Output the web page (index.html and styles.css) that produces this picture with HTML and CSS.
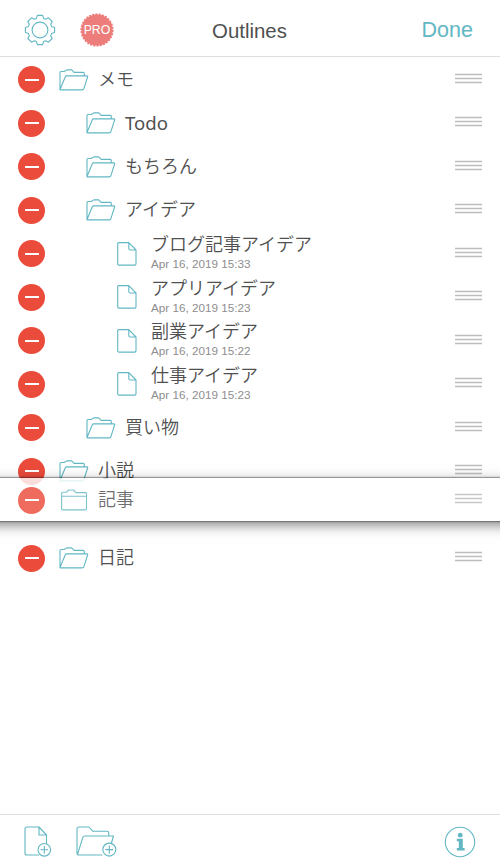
FILE: index.html
```html
<!DOCTYPE html>
<html lang="ja">
<head>
    <meta charset="UTF-8">
    <meta name="viewport" content="width=device-width, initial-scale=1.0">
    <title>Outlines</title>
    <link rel="stylesheet" href="styles.css">
</head>
<body>

    <!-- Shared icons -->
    <svg class="sprite">
        <symbol id="folder-open" viewBox="0 0 30 22">
            <path d="M1 20.5V3.5q0-1 1-1h3.2L7.8.9h4.9l2.4 2.5h9.2q1 0 1 1v2.2M1 20.5L6.2 8q.4-1.1 1.5-1.1h20.1q1.2 0 .8 1.1l-3.7 11.7q-.4 1.2-1.6 1.2H1.6q-.8 0-.6-.4z"/>
        </symbol>
        <symbol id="folder" viewBox="0 0 30 22">
            <path d="M2.6 19.7V4.3q0-1 1-1h3.6L9.8 1h4.6L17 3.6h9.5q1 0 1 1v15.1q0 1.2-1.2 1.2H3.8q-1.2 0-1.2-1.2zM2.6 7.2h24.9"/>
        </symbol>
        <symbol id="doc" viewBox="0 0 20 24">
            <path d="M2 .6h9.8L19 8v13.8q0 1.3-1.3 1.3H2Q.7 23.1.7 21.8V1.9Q.7.6 2 .6zM11.8.6v5.9Q11.8 8 13.3 8H19"/>
        </symbol>
        <symbol id="grip" viewBox="0 0 27 11">
            <path d="M0 1.5h27M0 5.5h27M0 9.5h27"/>
        </symbol>
    </svg>

    <header class="navbar">
        <div class="nav-left">
            <svg class="icon gear" viewBox="-16 -16 32 32">
                <path d="M-3.6-11.6L-2.6-14.6H2.6L3.6-11.6 5.66-10.75 8.49-12.16 12.16-8.49 10.75-5.66 11.6-3.6 14.6-2.6V2.6L11.6 3.6 10.75 5.66 12.16 8.49 8.49 12.16 5.66 10.75 3.6 11.6 2.6 14.6H-2.6L-3.6 11.6-5.66 10.75-8.49 12.16-12.16 8.49-10.75 5.66-11.6 3.6-14.6 2.6V-2.6L-11.6-3.6-10.75-5.66-12.16-8.49-8.49-12.16-5.66-10.75z"/>
                <circle r="7.9"/>
            </svg>
            <div class="pro">
                <svg viewBox="-17 -17 34 34">
                    <circle class="disc" r="15.6"/>
                    <circle class="teeth" r="15.7" pathLength="60"/>
                </svg>
                <span>PRO</span>
            </div>
        </div>
        <h1>Outlines</h1>
        <a class="done">Done</a>
    </header>

    <main>
        <ul class="list">
            <li class="row">
                <span class="remove"></span>
                <svg class="icon folder"><use href="#folder-open"/></svg>
                <span class="name">メモ</span>
                <svg class="grip"><use href="#grip"/></svg>
            </li>
            <li class="row sub">
                <span class="remove"></span>
                <svg class="icon folder"><use href="#folder-open"/></svg>
                <span class="name latin">Todo</span>
                <svg class="grip"><use href="#grip"/></svg>
            </li>
            <li class="row sub">
                <span class="remove"></span>
                <svg class="icon folder"><use href="#folder-open"/></svg>
                <span class="name">もちろん</span>
                <svg class="grip"><use href="#grip"/></svg>
            </li>
            <li class="row sub">
                <span class="remove"></span>
                <svg class="icon folder"><use href="#folder-open"/></svg>
                <span class="name">アイデア</span>
                <svg class="grip"><use href="#grip"/></svg>
            </li>
            <li class="row file">
                <span class="remove"></span>
                <svg class="icon doc"><use href="#doc"/></svg>
                <div class="text">
                    <span class="name">ブログ記事アイデア</span>
                    <span class="date">Apr 16, 2019 15:33</span>
                </div>
                <svg class="grip"><use href="#grip"/></svg>
            </li>
            <li class="row file">
                <span class="remove"></span>
                <svg class="icon doc"><use href="#doc"/></svg>
                <div class="text">
                    <span class="name">アプリアイデア</span>
                    <span class="date">Apr 16, 2019 15:23</span>
                </div>
                <svg class="grip"><use href="#grip"/></svg>
            </li>
            <li class="row file">
                <span class="remove"></span>
                <svg class="icon doc"><use href="#doc"/></svg>
                <div class="text">
                    <span class="name">副業アイデア</span>
                    <span class="date">Apr 16, 2019 15:22</span>
                </div>
                <svg class="grip"><use href="#grip"/></svg>
            </li>
            <li class="row file">
                <span class="remove"></span>
                <svg class="icon doc"><use href="#doc"/></svg>
                <div class="text">
                    <span class="name">仕事アイデア</span>
                    <span class="date">Apr 16, 2019 15:23</span>
                </div>
                <svg class="grip"><use href="#grip"/></svg>
            </li>
            <li class="row sub">
                <span class="remove"></span>
                <svg class="icon folder"><use href="#folder-open"/></svg>
                <span class="name">買い物</span>
                <svg class="grip"><use href="#grip"/></svg>
            </li>
            <li class="row">
                <span class="remove"></span>
                <svg class="icon folder"><use href="#folder-open"/></svg>
                <span class="name">小説</span>
                <svg class="grip"><use href="#grip"/></svg>
            </li>
            <!-- Empty slot, its row is being dragged -->
            <li class="slot">
                <div class="row dragging">
                    <span class="remove"></span>
                    <svg class="icon folder"><use href="#folder"/></svg>
                    <span class="name">記事</span>
                    <svg class="grip"><use href="#grip"/></svg>
                </div>
            </li>
            <li class="row">
                <span class="remove"></span>
                <svg class="icon folder"><use href="#folder-open"/></svg>
                <span class="name">日記</span>
                <svg class="grip"><use href="#grip"/></svg>
            </li>
        </ul>
    </main>

    <footer class="toolbar">
        <svg class="icon new-doc" viewBox="0 0 28 32">
            <path d="M14.5 29H3q-2 0-2-2V3q0-2 2-2h12l7.5 8v8.5M15 1v8h7.5"/>
            <circle cx="20.3" cy="23.8" r="6.3"/>
            <path d="M20.3 20.4v6.8M16.9 23.8h6.8"/>
        </svg>
        <svg class="icon new-folder" viewBox="0 0 42 32">
            <path d="M26 29H3q-2 0-2-2V3q0-2 2-2h10l3.7 4.2h14.5q1.5 0 1.5 1.5V10M1.6 28.2L6.8 11.4Q7.3 10 8.8 10h28.7l-2.2 7.5"/>
            <circle cx="33.3" cy="23.6" r="6.5"/>
            <path d="M33.3 20.1v7M29.8 23.6h7"/>
        </svg>
        <svg class="icon info" viewBox="0 0 32 32">
            <circle cx="16" cy="16" r="14.7"/>
            <circle class="solid" cx="16.2" cy="9.2" r="2.4"/>
            <path class="solid" d="M12.8 12.7h6v9.4h1.8v2.5h-7.8v-2.5h2v-6.9h-2z"/>
        </svg>
    </footer>

</body>
</html>
```
FILE: styles.css
```css
* {
    box-sizing: border-box;
}
body {
    margin: 0;
    height: 868px;
    display: flex;
    flex-direction: column;
    overflow: hidden;
    background-color: #fff;
    color: #505050;
    font-family: Inter, "Noto Sans CJK JP", sans-serif;
}
.sprite {
    display: none;
}
svg {
    display: block;
    flex: none;
}
.icon {
    fill: none;
    stroke: #62b7c3;
    stroke-width: 1.1;
    stroke-linejoin: round;
    stroke-linecap: round;
}

/* Top bar */
.navbar {
    flex: none;
    display: grid;
    grid-template-columns: 1fr auto 1fr;
    align-items: center;
    height: 57px;
    padding: 4px 27px 0 24px;
    border-bottom: 1px solid #dedede;
}
.nav-left {
    display: flex;
    align-items: center;
    gap: 24px;
}
.gear {
    width: 32px;
    height: 32px;
}
.pro {
    display: grid;
    place-items: center;
    color: #fff;
    font-family: "Liberation Sans", sans-serif;
    font-size: 12.3px;
}
.pro svg, .pro span {
    grid-area: 1 / 1;
}
.pro svg {
    width: 34px;
    height: 34px;
}
.disc {
    fill: #ed7d7b;
}
.teeth {
    fill: none;
    stroke: #ed7d7b;
    stroke-width: 1.8;
    stroke-dasharray: 1.3 .7;
}
h1 {
    margin: 3px 0 0 2px;
    font-family: "Liberation Sans", sans-serif;
    font-size: 20.4px;
    font-weight: 400;
}
.done {
    justify-self: end;
    margin-top: 1px;
    color: #62b7c3;
    font-family: "Liberation Sans", sans-serif;
    font-size: 21.5px;
}

/* Outline list */
main {
    flex: 1;
}
.list {
    margin: 0;
    padding: .8px 0 0;
    list-style: none;
}
.row {
    display: flex;
    align-items: center;
    height: 43.5px;
    padding: 0 18px;
}
.remove {
    display: flex;
    align-items: center;
    justify-content: center;
    width: 27px;
    height: 27px;
    border-radius: 50%;
    background-color: #eb4b3b;
}
.remove::before {
    content: "";
    width: 14px;
    height: 2px;
    background-color: #fff;
}
.folder {
    width: 30px;
    height: 22px;
    margin-left: 14px;
}
.sub .folder {
    margin-left: 41px;
}
.doc {
    width: 20px;
    height: 24px;
    margin-left: 72px;
}
.name {
    margin-left: 9px;
    font-size: 18px;
    font-weight: 350;
    line-height: 22px;
}
.latin {
    font-family: "Noto Sans", sans-serif;
    font-size: 18.6px;
    font-weight: 400;
}
.text {
    display: flex;
    flex-direction: column;
    margin: -1px 0 0 14px;
}
.text .name {
    margin: 0;
}
.date {
    color: #8e8e8e;
    font-family: "Liberation Sans", sans-serif;
    font-size: 11.7px;
    line-height: 16px;
}
.grip {
    width: 27px;
    height: 11px;
    margin: -3px 0 0 auto;
    stroke: #bdbdc0;
    stroke-width: 1.3;
}
.slot {
    position: relative;
    height: 43.5px;
}
/* wider than the screen so the shadow stays even up to the edges */
.dragging {
    position: absolute;
    top: -15px;
    left: -20px;
    right: -20px;
    height: 43.5px;
    padding: 1px 38px 0;
    background-color: #fff;
    opacity: .82;
    box-shadow: 0 0 1px 1px rgba(0, 0, 0, .4), 0 4px 12px rgba(0, 0, 0, .6);
}

/* Bottom bar */
.toolbar {
    flex: none;
    display: flex;
    align-items: center;
    height: 54px;
    padding: 0 24px;
    border-top: 1px solid #dedede;
}
.new-doc {
    width: 28px;
    height: 32px;
}
.new-folder {
    width: 42px;
    height: 32px;
    margin-left: 24px;
}
.info {
    width: 32px;
    height: 32px;
    margin-left: auto;
}
.solid {
    fill: #62b7c3;
    stroke: none;
}
```
